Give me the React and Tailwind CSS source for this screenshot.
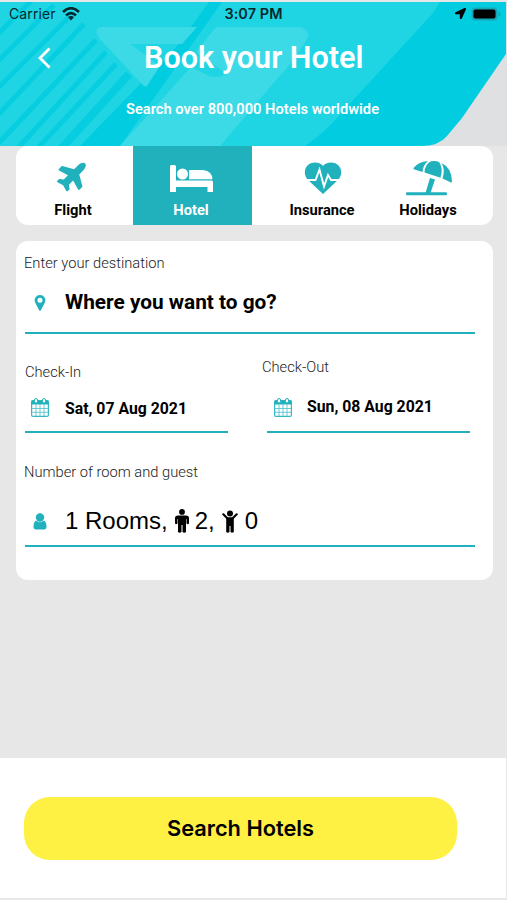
import { useState } from "react";
import { FaPlane, FaLocationArrow } from "react-icons/fa";

const HeaderArt = () => (
  <svg viewBox="0 0 507 144" className="absolute inset-0 w-[507px] h-[144px]">
    <rect width="507" height="144" fill="#dfe0e2" />
    <path d="M0 0H506V52L462 116L447 134Q439 144 421 144H0Z" fill="#02cce0" />
    <path d="M0 0H209L176 45L80 144H0Z" fill="#20d5e3" />
    {/* diagonal stripes */}
    <g stroke="#06cee0" strokeWidth="5">
      <path d="M-4 34L34 -4" />
      <path d="M-4 61L54 3" />
      <path d="M-4 88L70 14" />
      <path d="M-4 115L84 22" />
      <path d="M-4 144L96 38" />
      <path d="M16 148L106 50" />
      <path d="M36 148L116 62" />
      <path d="M60 148L129 72" strokeWidth="8" />
    </g>
    <path d="M222 0H440L433 11L345 107Q326 130 305 144H120Z" fill="#20d5e3" />
    <path
      d="M101 25H197L182 42H130L160 64L147 84Q145 86 141 81L99 36Q93 27 101 25Z"
      fill="#3cdae6"
    />
    <path
      d="M226 25H300Q311 28 307 37Q294 59 277 77L220 144H120L191 65L209 74Q219 77 227 72L196 50L216 25Z"
      fill="#3cdae6"
    />
  </svg>
);

const WifiIcon = () => (
  <svg viewBox="0 0 18 14" className="w-[18px] h-[14px]" fill="none" stroke="#06262b" strokeWidth="2.6">
    <path d="M1 5Q9 -2.500 17 5" />
    <path d="M4 8.400Q9 3.900 14 8.400" />
    <path d="M6 10L9 13.500L12 10Q9 8 6 10Z" fill="#06262b" stroke="none" />
  </svg>
);

const BatteryIcon = () => (
  <svg viewBox="0 0 30 14" className="w-[30px] h-[14px]">
    <rect x="0.500" y="0.500" width="26" height="13" rx="4" fill="#16a5b4" />
    <rect x="2.500" y="2.500" width="22" height="9" rx="2" fill="black" />
    <path d="M27.500 4.500Q29.500 5.500 29.500 7Q29.500 8.500 27.500 9.500Z" fill="#16a5b4" />
  </svg>
);

const BackIcon = () => (
  <svg viewBox="0 0 14 22" className="w-[14px] h-[22px]" fill="none" stroke="white" strokeWidth="2.8">
    <path d="M12.500 1.500L3 11L12.500 20.500" />
  </svg>
);

const BedIcon = () => (
  <svg viewBox="0 0 43 28" className="w-[43px] h-[28px]" fill="currentColor">
    <path d="M1.500 1h3Q6 1 6 2.500V16.500H41.500Q43 16.500 43 18V28H37.500V23H6V28H0V2.500Q0 1 1.500 1Z" />
    <circle cx="12.500" cy="10" r="5.500" />
    <path d="M20 6H33Q42 7 42.500 15.200H19V7Q19 6 20 6Z" />
  </svg>
);

const HeartIcon = () => (
  <svg viewBox="0 0 38 32" className="w-[38px] h-[32px]">
    <path
      d="M19 4C22-.500 31-1 35 4C38.500 8.500 37.500 14.500 34 18L19 32L4 18C.500 14.500-.500 8.500 3 4C7-1 16-.500 19 4Z"
      fill="#20b1bd"
    />
    <path
      d="M3 18H11.500L15.500 7.500L20 24.500L24 13L27 18H35"
      fill="none"
      stroke="white"
      strokeWidth="1.9"
    />
  </svg>
);

const UmbrellaIcon = () => (
  <svg viewBox="0 0 46 36" className="w-[46px] h-[36px]" fill="#20b1bd">
    <path d="M7.500 8Q12 2 22 1Q17 5 16.500 12L8.500 9.500Q7 9 7.500 8Z" />
    <path d="M18.500 12.500Q19 4 25 1.300Q30 .500 33 2Q37.500 8 34.500 17.700Z" />
    <path d="M35.500 3Q46 8 46 21.500Q46 23 44.500 22.300L36.500 18.500Q39.500 9 35.500 3Z" />
    <path d="M24 18L29 19.500L24.500 33H19.500Z" />
    <rect x="0" y="32.300" width="41" height="3" rx="1.200" />
  </svg>
);

const PinIcon = () => (
  <svg viewBox="0 0 12 16" className="w-[12px] h-[16px]">
    <path
      fillRule="evenodd"
      d="M6 0A5.300 5.300 0 0 1 11 7.200L7 15Q6 17 5 15L1 7.200A5.300 5.300 0 0 1 6 0ZM6 2.800A2.400 2.400 0 1 0 6 7.800A2.400 2.400 0 1 0 6 2.800Z"
      fill="#20b1bd"
    />
  </svg>
);

const CalendarIcon = () => (
  <svg viewBox="0 0 18 19" className="w-[18px] h-[19px]">
    <rect x="0.600" y="2.600" width="16.800" height="15.800" rx="1.500" fill="white" stroke="#36b8c3" strokeWidth="1.200" />
    <path d="M.500 2.500H17.500V6.500H.500Z" fill="#20b1bd" />
    <path d="M5 6V18M9 6V18M13 6V18M1 10.500H17M1 14.300H17" stroke="#5cc5ce" strokeWidth="0.900" />
    <rect x="3.500" y="0.500" width="3" height="4.500" rx="1.500" fill="white" stroke="#20b1bd" />
    <rect x="11.500" y="0.500" width="3" height="4.500" rx="1.500" fill="white" stroke="#20b1bd" />
  </svg>
);

const UserIcon = () => (
  <svg viewBox="0 0 14 17" className="w-[14px] h-[17px]" fill="#20b1bd">
    <circle cx="7" cy="4.500" r="4.200" />
    <path d="M3 7.500Q7 11 11 7.500Q13.500 9 13.500 13.500Q13.500 16.500 11 16.500H3Q.500 16.500 .500 13.500Q.500 9 3 7.500Z" />
  </svg>
);

const ManIcon = () => (
  <svg viewBox="0 0 14 24" className="w-[14px] h-[24px]">
    <circle cx="7" cy="2.900" r="2.900" />
    <path d="M3 6.500H11Q14 6.500 14 9V14.500Q12.700 16 11.500 14.500V10H11V23Q9.200 24.500 7.500 23V16H6.500V23Q4.700 24.500 3 23V10H2.500V14.500Q1.200 16 0 14.500V9Q0 6.500 3 6.500Z" />
  </svg>
);

const ChildIcon = () => (
  <svg viewBox="0 0 16 23" className="w-[16px] h-[23px]">
    <circle cx="8" cy="3.500" r="3" />
    <path d="M1.300 4.300L5.500 8.500H10.500L14.700 4.300" fill="none" stroke="black" strokeWidth="2.200" strokeLinecap="round" />
    <path d="M4.200 7.500H11.800V22Q10 23.500 8.500 22V16H7.500V22Q6 23.500 4.200 22Z" />
  </svg>
);

const TABS = [
  { name: "Flight", box: "w-[117px] pr-[3px]", icon: <FaPlane className="mb-[7px] ml-px w-[33px] h-[30px] -rotate-45" /> },
  { name: "Hotel", box: "w-[119px] pr-[3px]", icon: <BedIcon /> },
  { name: "Insurance", box: "w-[140px]", icon: <span className="ml-[2px]"><HeartIcon /></span> },
  { name: "Holidays", box: "w-[72px]", icon: <span className="ml-[2px]"><UmbrellaIcon /></span> },
];

const Label = ({ children }) => (
  <div className="text-[14.7px] leading-5 font-light text-[#222]">{children}</div>
);

const App = () => {
  const [activeTab, setActiveTab] = useState("Hotel");

  return (
    <div className="w-[507px] h-[900px] flex flex-col overflow-hidden bg-[#e7e7e7] pt-[2px] font-[Roboto,sans-serif] text-black">
      {/* Header */}
      <header className="relative h-[144px] shrink-0">
        <HeaderArt />
        <div className="relative">
          <div className="flex h-[23px] items-center justify-between pl-[9px] pr-[6px] font-[Inter,sans-serif] text-[14px] text-[#06262b]">
            <div className="flex w-[207px] items-center gap-[6px]">
              <span className="tracking-[0.1px]">Carrier</span>
              <WifiIcon />
            </div>
            <span className="text-[14.4px] font-semibold tracking-[0.1px]">3:07 PM</span>
            <div className="flex w-[210px] items-center justify-end gap-[5px]">
              <FaLocationArrow className="w-[11px] h-[11px] text-black" />
              <BatteryIcon />
            </div>
          </div>
          <div className="flex h-[65px] items-center pl-[37px] text-white">
            <button><BackIcon /></button>
            <h1 className="ml-[93px] text-[30.6px] leading-9 font-semibold">Book your Hotel</h1>
          </div>
          <p className="pt-[7px] pr-[2px] text-center text-[14.7px] leading-6 font-semibold text-white">
            Search over 800,000 Hotels worldwide
          </p>
        </div>
      </header>

      {/* Tabs */}
      <nav className="mx-4 mr-[14px] flex h-[79px] shrink-0 overflow-hidden rounded-xl bg-white">
        {TABS.map((tab) => (
          <button
            key={tab.name}
            onClick={() => setActiveTab(tab.name)}
            className={`${tab.box} flex flex-col items-center ${
              activeTab === tab.name ? "bg-[#20b1bd] text-white" : "text-[#20b1bd]"
            }`}
          >
            <span className="mt-3 flex h-[40px] items-center">{tab.icon}</span>
            <span
              className={`text-[14.7px] leading-[24px] font-bold ${
                activeTab === tab.name ? "text-white" : "text-black"
              }`}
            >
              {tab.name}
            </span>
          </button>
        ))}
      </nav>

      {/* Search form */}
      <main className="mt-4 mr-[14px] ml-4 h-[339px] shrink-0 rounded-xl bg-white pt-3 pl-[9px]">
        <div className="-ml-px"><Label>Enter your destination</Label></div>
        <div className="flex h-[61px] w-[450px] items-center border-b-2 border-[#20b1bd] pl-[9px]">
          <PinIcon />
          <span className="ml-[19px] pt-px text-[20.8px] font-bold">Where you want to go?</span>
        </div>

        <div className="flex">
          <div className="w-[203px] pt-[28px]">
            <Label>Check-In</Label>
            <div className="flex h-[51px] items-center border-b-2 border-[#20b1bd] pt-[2px] pl-[6px]">
              <CalendarIcon />
              <span className="ml-4 pt-[2px] text-[15.8px] font-bold">Sat, 07 Aug 2021</span>
            </div>
          </div>
          <div className="ml-[39px] w-[203px] pt-[23px]">
            <div className="-ml-[5px]"><Label>Check-Out</Label></div>
            <div className="flex h-[56px] items-center border-b-2 border-[#20b1bd] pt-[7px] pl-[7px]">
              <CalendarIcon />
              <span className="ml-[15px] pb-px text-[15.8px] font-bold">Sun, 08 Aug 2021</span>
            </div>
          </div>
        </div>

        <div className="-ml-px pt-[29px]"><Label>Number of room and guest</Label></div>
        <div className="flex h-[65px] w-[450px] items-center border-b-2 border-[#20b1bd] pt-[15px] pl-[8px] font-['Liberation_Sans',sans-serif] text-[24px]">
          <span className="pt-px"><UserIcon /></span>
          <span className="ml-[18px]">1 Rooms,</span>
          <span className="ml-[7px]"><ManIcon /></span>
          <span className="ml-[6px]">2,</span>
          <span className="ml-[7px]"><ChildIcon /></span>
          <span className="ml-[7px]">0</span>
        </div>
      </main>

      {/* Footer */}
      <footer className="mt-auto mr-px mb-[2px] h-[140px] shrink-0 bg-white pt-[39px] pl-6">
        <button className="h-[63px] w-[433px] rounded-[26px] bg-[#fff044] font-[Inter,sans-serif] text-[21.8px] font-semibold">
          Search Hotels
        </button>
      </footer>
    </div>
  );
};

export default App;
